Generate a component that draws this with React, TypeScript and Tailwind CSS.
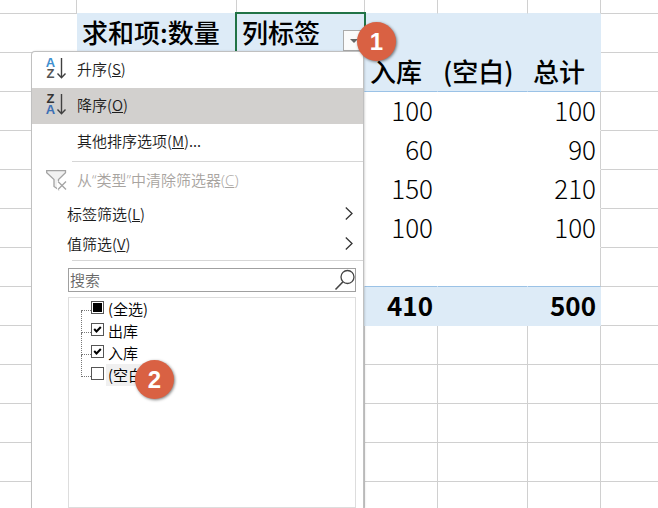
import { useState } from 'react';
import clsx from 'clsx';

type Row = {
  kind: 'plain' | 'columns' | 'data' | 'last' | 'total';
  cells?: string[];
};

const rows: Row[] = [
  { kind: 'columns', cells: ['入库', '(空白)', '总计'] },
  { kind: 'data', cells: ['100', '', '100'] },
  { kind: 'data', cells: ['60', '', '90'] },
  { kind: 'data', cells: ['150', '', '210'] },
  { kind: 'data', cells: ['100', '', '100'] },
  { kind: 'last', cells: ['', '', ''] },
  { kind: 'total', cells: ['410', '', '500'] },
  { kind: 'plain' },
  { kind: 'plain' },
  { kind: 'plain' },
  { kind: 'plain' },
  { kind: 'plain' },
];

const pivotStyles = {
  plain: 'border-b-[#d0d0d0]',
  columns: 'border-b-[#9bc2e6] bg-[#ddebf7] text-left font-medium pl-[5px]',
  data: 'border-b-white text-right font-light pr-1',
  last: 'border-b-[#9bc2e6]',
  total: 'border-b-[#ddebf7] bg-[#ddebf7] text-right font-bold pr-1',
};

const edgeStyles = {
  plain: 'border-r-[#d0d0d0]',
  columns: 'border-r-[#ddebf7]',
  data: 'border-r-white',
  last: 'border-r-white',
  total: 'border-r-[#ddebf7]',
};

function SortIcon({ descending }: { descending?: boolean }) {
  return (
    <svg className="h-6 w-[22px] shrink-0 overflow-visible font-['Liberation_Sans',sans-serif]" viewBox="0 0 22 24" fill="none" aria-hidden="true">
      <text x="4.5" y="10" textAnchor="middle" fontSize="13" fontWeight="bold" fill={descending ? '#333333' : '#3f8fd0'}>
        {descending ? 'Z' : 'A'}
      </text>
      <text x="4.5" y="21" textAnchor="middle" fontSize="13" fontWeight="bold" fill={descending ? '#3c6fb5' : '#555555'}>
        {descending ? 'A' : 'Z'}
      </text>
      <path d="M15.5 1v19.500M11.500 16.500l4 4.200 4-4.200" stroke="#404040" strokeWidth="1.4" />
    </svg>
  );
}

function ClearFilterIcon() {
  return (
    <svg className="h-6 w-[22px] shrink-0" viewBox="0 0 22 24" fill="none" aria-hidden="true">
      <path d="M.7 1.7h18.8v2L12.500 10.500v10l-4.500-3v-7L.7 3.700z" fill="#f1f1f1" stroke="#a3a3a3" strokeWidth="1.3" />
      <path d="M11 12h9v9h-9z" fill="white" />
      <path d="M12 12.500l8 8M20 12.500l-8 8" stroke="#a3a3a3" strokeWidth="1.3" />
    </svg>
  );
}

function Chevron() {
  return (
    <svg className="h-3.5 w-2" viewBox="0 0 8 14" fill="none" aria-hidden="true">
      <path d="M.8 .5l6.200 6-6.200 6" stroke="#333333" strokeWidth="1.3" />
    </svg>
  );
}

function Badge({ children, className }: { children: string; className: string }) {
  return (
    <span className={clsx('absolute z-30 flex size-[39px] items-center justify-center rounded-full bg-[#d96143] font-["Liberation_Sans",sans-serif] text-2xl leading-6 font-bold text-white shadow-[1px_1px_3px_rgba(0,0,0,0.5)]', className)}>
      {children}
    </span>
  );
}

function PivotTable({ onToggle }: { onToggle: () => void }) {
  return (
    <table className="w-full table-fixed border-separate border-spacing-0 text-[26px] leading-8 text-black">
      <colgroup>
        <col className="w-[77px]" />
        <col className="w-[160px]" />
        <col className="w-[128px]" />
        <col className="w-[73px]" />
        <col className="w-[90px]" />
        <col className="w-[73px]" />
        <col />
      </colgroup>
      <tbody>
        <tr className="h-3.5">
          <td className="border-r border-b border-[#d0d0d0]" />
          {[1, 2, 3, 4, 5].map((c) => (
            <td key={c} className="border-r border-b border-r-[#d0d0d0] border-b-[#ddebf7]" />
          ))}
          <td className="border-b border-[#d0d0d0]" />
        </tr>
        <tr className="h-[39px]">
          <td className="border-b border-[#d0d0d0]" />
          <th className="border-b border-[#ddebf7] bg-[#ddebf7] p-0 pb-0.5 pl-[5px] text-left font-medium whitespace-nowrap">求和项:数量</th>
          <th className="relative border-r border-b border-[#ddebf7] bg-[#ddebf7] p-0 pb-0.5 pl-[5px] text-left font-medium whitespace-nowrap">
            列标签
            <span className="absolute -top-0.5 -right-0.5 bottom-0 -left-0.5 z-10 border-2 border-b-0 border-[#217346]" />
            <button
              type="button"
              aria-label="筛选列标签"
              onClick={onToggle}
              className="absolute right-0 bottom-px z-10 flex size-[21px] items-center justify-center border border-[#ababab] bg-[#fbfbfb]"
            >
              <svg className="h-1 w-2" viewBox="0 0 8 4" aria-hidden="true">
                <path d="M0 0h8L4 4z" fill="#666666" />
              </svg>
            </button>
            <Badge className="top-2 -right-8">1</Badge>
          </th>
          {[3, 4, 5].map((c) => (
            <td key={c} className="border-r border-b border-[#ddebf7] bg-[#ddebf7]" />
          ))}
          <td className="border-b border-[#d0d0d0]" />
        </tr>
        {rows.map((row, r) => (
          <tr key={r} className="h-[39px]">
            <td className="border-b border-[#d0d0d0]" />
            {[0, 1].map((c) => (
              <td key={c} className={clsx('border-r border-b', pivotStyles[row.kind], edgeStyles[row.kind])} />
            ))}
            {[0, 1, 2].map((c) => (
              <td
                key={c}
                className={clsx(
                  'border-r border-b p-0 pb-0.5 whitespace-nowrap',
                  pivotStyles[row.kind],
                  c === 2 && row.kind !== 'columns' && row.kind !== 'total' ? 'border-r-[#d0d0d0]' : edgeStyles[row.kind],
                )}
              >
                {row.cells?.[c]}
              </td>
            ))}
            <td className="border-b border-[#d0d0d0]" />
          </tr>
        ))}
      </tbody>
    </table>
  );
}

function CheckRow({ label, checked, mixed, active, first, onChange }: {
  label: string;
  checked: boolean;
  mixed?: boolean;
  active?: boolean;
  first?: boolean;
  onChange: () => void;
}) {
  return (
    <li className="flex h-[22px] items-start">
      <span className={clsx('w-2.5 shrink-0 border-b border-dotted border-[#777777]', first ? 'h-[13px]' : '-mt-[9px] h-[22px] border-l')} />
      <label className="flex items-start">
        <span className="mt-[3px] grid size-[13px] shrink-0">
          <input
            type="checkbox"
            checked={checked}
            onChange={onChange}
            className="col-start-1 row-start-1 size-[13px] appearance-none border border-[#555555] bg-white"
          />
          {mixed && <span className="pointer-events-none col-start-1 row-start-1 m-[2px] bg-black" />}
          {checked && !mixed && (
            <svg className="pointer-events-none col-start-1 row-start-1 size-[13px]" viewBox="0 0 13 13" fill="none" aria-hidden="true">
              <path d="M3.200 6l2.300 2.500 4.300-4.500" stroke="black" strokeWidth="2" />
            </svg>
          )}
        </span>
        <span className={clsx('ml-0.5 h-[22px] px-0.5 leading-[22px] text-black', active && 'bg-[#f0f0f0]')}>{label}</span>
      </label>
    </li>
  );
}

function FilterMenu() {
  const [items, setItems] = useState([
    { label: '出库', checked: true },
    { label: '入库', checked: true },
    { label: '(空白)', checked: false },
  ]);
  const all = items.every((i) => i.checked);
  const some = items.some((i) => i.checked);

  return (
    <div className="absolute top-[51px] bottom-0 left-[31px] z-20 flex w-[333px] flex-col rounded-t border border-b-0 border-[#c0c0c0] bg-white text-[15px] font-[350] text-[#1c1c1c] shadow-[1px_0_2px_rgba(0,0,0,0.15)]">
      <button type="button" className="flex h-9 shrink-0 items-center gap-[9px] pb-0.5 pl-3.5">
        <SortIcon />
        <span>升序(<u>S</u>)</span>
      </button>
      <button type="button" className="flex h-9 shrink-0 items-center gap-[9px] bg-[#d2d0ce] pb-0.5 pl-3.5">
        <SortIcon descending />
        <span>降序(<u>O</u>)</span>
      </button>
      <button type="button" className="flex h-9 shrink-0 items-center pb-0.5 pl-[45px]">
        <span>其他排序选项(<u>M</u>)...</span>
      </button>
      <hr className="mt-px ml-10 border-[#d6d6d6]" />
      <button type="button" disabled className="flex h-[37px] shrink-0 items-center gap-[9px] pl-3.5 text-[#a8a4a0]">
        <ClearFilterIcon />
        <span className="font-['Open_Sans','Noto_Sans_CJK_SC',sans-serif]">从“类型”中清除筛选器(<u>C</u>)</span>
      </button>
      <button type="button" className="flex h-[30px] shrink-0 items-center justify-between pr-2.5 pl-[35px]">
        <span>标签筛选(<u>L</u>)</span>
        <Chevron />
      </button>
      <button type="button" className="flex h-[30px] shrink-0 items-center justify-between pr-2.5 pl-[35px]">
        <span>值筛选(<u>V</u>)</span>
        <Chevron />
      </button>
      <hr className="mt-px ml-10 border-[#d6d6d6]" />
      <div className="mt-[7px] mr-[7px] ml-9 flex h-6 shrink-0 items-center border border-[#a0a0a0]">
        <input
          type="text"
          aria-label="搜索"
          placeholder="搜索"
          className="h-full min-w-0 flex-1 pb-0.5 pl-px outline-none placeholder:text-[#666666]"
        />
        <svg className="h-[22px] w-[21px] shrink-0" viewBox="0 0 21 22" fill="none" aria-hidden="true">
          <circle cx="13.5" cy="8" r="6.5" stroke="#444444" strokeWidth="1.3" />
          <path d="M9 12.800L1.500 20.500" stroke="#444444" strokeWidth="1.6" />
        </svg>
      </div>
      <ul className="mt-[5px] mr-[7px] ml-9 flex-1 border border-[#dddddd] pl-3">
        <CheckRow
          first
          label="(全选)"
          checked={all}
          mixed={some && !all}
          onChange={() => setItems(items.map((i) => ({ ...i, checked: !all })))}
        />
        {items.map((item, n) => (
          <CheckRow
            key={item.label}
            label={item.label}
            checked={item.checked}
            active={n === 2}
            onChange={() => setItems(items.map((i, k) => (k === n ? { ...i, checked: !i.checked } : i)))}
          />
        ))}
      </ul>
      <Badge className="top-[308px] left-[103px]">2</Badge>
    </div>
  );
}

export default function App() {
  const [open, setOpen] = useState(true);

  return (
    <main className='relative h-screen overflow-hidden bg-white font-["Noto_Sans_CJK_SC",sans-serif]'>
      <PivotTable onToggle={() => setOpen(!open)} />
      {open && <FilterMenu />}
    </main>
  );
}
